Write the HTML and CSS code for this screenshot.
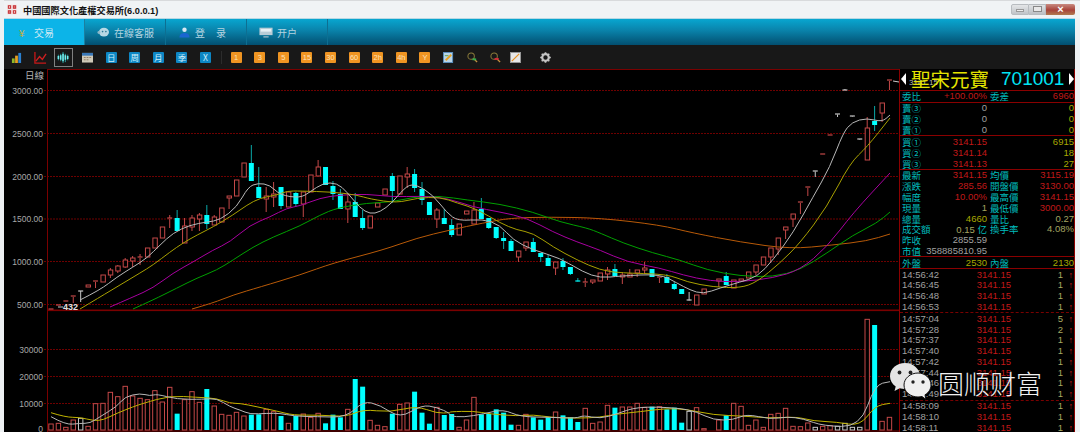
FILE: index.html
```html
<!DOCTYPE html>
<html lang="zh-Hant">
<head>
<meta charset="utf-8">
<title>中國國際文化產權交易所</title>
<link rel="stylesheet" href="styles.css">
</head>
<body>
<div class="window">
  <header class="titlebar">
    <svg class="seal" viewBox="0 0 12 12"><rect width="12" height="12" fill="#f4e8e8"/><path d="M1 1h4v4H1zM7 1h4v4H7zM1 7h4v4H1zM7 7h4v4H7z" fill="#c4282c"/><path d="M2 3h2M3 2v2M8 3h2M2 9h2M8 9h2M9 8v2" stroke="#fff" stroke-width=".7"/></svg>
    <span class="title">中國國際文化產權交易所(6.0.0.1)</span>
    <div class="winbtns">
      <span class="winbtn min"><i class="glyph-min"></i></span>
      <span class="winbtn max"><i class="glyph-max"></i></span>
      <span class="winbtn close">×</span>
    </div>
  </header>

  <nav class="nav">
    <a class="tab active"><span class="yen">¥</span><span>交易</span></a>
    <a class="tab"><svg class="nav-ico" viewBox="0 0 14 12"><ellipse cx="7.5" cy="5.5" rx="5.5" ry="4.8" fill="#b8d8e4"/><circle cx="2" cy="6" r="1.6" fill="#8fb8c8"/><circle cx="6" cy="5" r=".9" fill="#2a7a98"/><circle cx="9.6" cy="5" r=".9" fill="#2a7a98"/></svg><span>在線客服</span></a>
    <a class="tab"><svg class="nav-ico" viewBox="0 0 14 12"><circle cx="7" cy="3" r="2.4" fill="#d8e8f4"/><path d="M1.5 11.5c0-4 2.500-5 5.500-5s5.500 1 5.500 5z" fill="#1a66d0"/></svg><span class="spaced">登</span><span>录</span></a>
    <a class="tab"><svg class="nav-ico wide" viewBox="0 0 16 12"><rect x=".5" y=".5" width="15" height="8.500" fill="#b9ccd6"/><rect x="2" y="2" width="12" height="3" fill="#e8f0f4"/><path d="M5 11h6" stroke="#9fb6c2" stroke-width="1.500"/></svg><span>开户</span></a>
  </nav>

  <div class="toolbar">
    <div class="slot"><svg class="ti" viewBox="0 0 12 12"><rect x="1" y="7" width="3" height="5" fill="#8fb82a"/><rect x="4.500" y="4" width="3" height="8" fill="#e8a020"/><rect x="8" y="1" width="3" height="11" fill="#2a80d0"/></svg></div>
    <div class="slot"><svg class="ti big" viewBox="0 0 14 14"><path d="M1 1v12h12" fill="none" stroke="#c81818" stroke-width="1.400"/><path d="M2 11l4-5 3 3 4-6" fill="none" stroke="#d02020" stroke-width="1.400"/></svg></div>
    <div class="slot"><div class="selected"><svg class="ti big" viewBox="0 0 14 14"><path d="M1.500 4v6M4 3v8M6.500 1v12M9 3v9M11.500 4v6" stroke="#2cc8c8" stroke-width=".8"/><path d="M1.500 5.500v3M4 4.500v5M6.500 3v8M9 4.500v5M11.500 5.500v3" stroke="#6ff0f0" stroke-width="1.700"/></svg></div></div>
    <div class="slot"><svg class="ti" viewBox="0 0 12 12"><rect y="1" width="12" height="10.500" fill="#cfc9b8"/><rect y="1" width="12" height="3" fill="#3a78b8"/><path d="M2 6h2M5 6h2M8 6h2M2 8.500h2M5 8.500h2" stroke="#907860"/></svg></div>
    <div class="slot"><span class="key blue">日</span></div>
    <div class="slot"><span class="key blue">周</span></div>
    <div class="slot"><span class="key blue">月</span></div>
    <div class="slot"><span class="key blue">季</span></div>
    <div class="slot"><span class="key blue">X</span></div>
    <i class="tb-sep"></i>
    <div class="slot"><span class="key orange">1</span></div>
    <div class="slot"><span class="key orange">3</span></div>
    <div class="slot"><span class="key orange">5</span></div>
    <div class="slot"><span class="key orange">15</span></div>
    <div class="slot"><span class="key orange">30</span></div>
    <div class="slot"><span class="key orange">60</span></div>
    <div class="slot"><span class="key orange">2h</span></div>
    <div class="slot"><span class="key orange">4h</span></div>
    <div class="slot"><span class="key orange">Y</span></div>
    <div class="slot"><svg class="ti" viewBox="0 0 12 12"><rect x=".5" y=".5" width="10" height="11" fill="#b8d4e8" stroke="#5a90c0"/><path d="M3 9l6-6" stroke="#e8a020" stroke-width="2"/><path d="M2 4h4" stroke="#60a040"/></svg></div>
    <div class="slot"><svg class="ti" viewBox="0 0 12 12"><circle cx="4.500" cy="4.500" r="3.500" fill="none" stroke="#8a7a3a" stroke-width="1.100"/><path d="M7.500 7.500l3.500 3.500" stroke="#c89040" stroke-width="1.500"/><path d="M6 8h4" stroke="#30b050" stroke-width="2"/></svg></div>
    <div class="slot"><svg class="ti" viewBox="0 0 12 12"><circle cx="4.500" cy="4.500" r="3.500" fill="none" stroke="#8a7a3a" stroke-width="1.100"/><path d="M7.500 7.500l3.500 3.500" stroke="#c89040" stroke-width="1.500"/><path d="M5 7.500h4.500" stroke="#d82838" stroke-width="2"/></svg></div>
    <div class="slot narrow"><svg class="ti" viewBox="0 0 12 12"><rect x=".5" y=".5" width="11" height="11" fill="#e8e8e8" stroke="#999"/><path d="M2 10l8-8" stroke="#e89020" stroke-width="1.300"/></svg></div>
    <div class="slot gear"><svg class="ti" viewBox="0 0 12 12"><circle cx="6" cy="6" r="3.600" fill="none" stroke="#c4c4c4" stroke-width="2.400"/><path d="M6 .2v2.400M6 9.400v2.400M.2 6h2.400M9.400 6h2.400M1.900 1.900l1.700 1.700M8.400 8.400l1.700 1.700M1.900 10.100l1.700-1.700M8.400 3.600l1.700-1.700" stroke="#c4c4c4" stroke-width="1.800"/></svg></div>
  </div>

  <main class="main">
    <section class="chart">
      <svg id="kline" class="kline" viewBox="4 69 895 363" xmlns="http://www.w3.org/2000/svg"></svg>
    </section>

    <aside class="panel">
      <div class="stock">
        <span class="tag">3141.15</span>
        <i class="tri left"></i>
        <span class="stock-name">聖宋元寶</span>
        <span class="stock-code">701001</span>
        <i class="tri right"></i>
      </div>
      <div class="group">
        <div class="row"><div class="cell"><b>委比</b><span class="red">+100.00%</span></div><div class="cell"><b>委差</b><span class="red">6960</span></div></div>
      </div>
      <div class="group book">
        <div class="row"><div class="cell"><b>賣③</b><span class="gray">0</span></div><div class="cell"><b></b><span class="yellow">0</span></div></div>
        <div class="row"><div class="cell"><b>賣②</b><span class="gray">0</span></div><div class="cell"><b></b><span class="yellow">0</span></div></div>
        <div class="row"><div class="cell"><b>賣①</b><span class="gray">0</span></div><div class="cell"><b></b><span class="yellow">0</span></div></div>
      </div>
      <div class="group book">
        <div class="row"><div class="cell"><b>買①</b><span class="red">3141.15</span></div><div class="cell"><b></b><span class="yellow">6915</span></div></div>
        <div class="row"><div class="cell"><b>買②</b><span class="red">3141.14</span></div><div class="cell"><b></b><span class="yellow">18</span></div></div>
        <div class="row"><div class="cell"><b>買③</b><span class="red">3141.13</span></div><div class="cell"><b></b><span class="yellow">27</span></div></div>
      </div>
      <div class="group">
        <div class="row"><div class="cell"><b>最新</b><span class="red">3141.15</span></div><div class="cell"><b>均價</b><span class="red">3115.19</span></div></div>
        <div class="row"><div class="cell"><b>漲跌</b><span class="red">285.56</span></div><div class="cell"><b>開盤價</b><span class="red">3130.00</span></div></div>
        <div class="row"><div class="cell"><b>幅度</b><span class="red">10.00%</span></div><div class="cell"><b>最高價</b><span class="red">3141.15</span></div></div>
        <div class="row"><div class="cell"><b>現量</b><span class="pale">1</span></div><div class="cell"><b>最低價</b><span class="red">3000.00</span></div></div>
        <div class="row"><div class="cell"><b>總量</b><span class="yellow">4660</span></div><div class="cell"><b>量比</b><span class="pale">0.27</span></div></div>
        <div class="row"><div class="cell"><b>成交額</b><span class="pale">0.15 <em>亿</em></span></div><div class="cell"><b>換手率</b><span class="pale">4.08%</span></div></div>
        <div class="row"><div class="cell"><b>昨收</b><span class="gray">2855.59</span></div><div class="cell"></div></div>
        <div class="row"><div class="cell"><b>市值</b><span class="gray">358885810.95</span></div><div class="cell"></div></div>
      </div>
      <div class="group">
        <div class="row"><div class="cell"><b>外盤</b><span class="yellow">2530</span></div><div class="cell"><b>內盤</b><span class="yellow">2130</span></div></div>
      </div>
      <div class="trades">
        <div class="minute">
          <div class="trade"><span class="t">14:56:42</span><span class="p">3141.15</span><span class="v">1</span><span class="a">↑</span></div>
          <div class="trade"><span class="t">14:56:45</span><span class="p">3141.15</span><span class="v">1</span><span class="a">↑</span></div>
          <div class="trade"><span class="t">14:56:48</span><span class="p">3141.15</span><span class="v">1</span><span class="a">↑</span></div>
          <div class="trade"><span class="t">14:56:53</span><span class="p">3141.15</span><span class="v">1</span><span class="a">↑</span></div>
        </div>
        <div class="minute">
          <div class="trade"><span class="t">14:57:04</span><span class="p">3141.15</span><span class="v">5</span><span class="a">↑</span></div>
          <div class="trade"><span class="t">14:57:28</span><span class="p">3141.15</span><span class="v">2</span><span class="a">↑</span></div>
          <div class="trade"><span class="t">14:57:37</span><span class="p">3141.15</span><span class="v">1</span><span class="a">↑</span></div>
          <div class="trade"><span class="t">14:57:40</span><span class="p">3141.15</span><span class="v">1</span><span class="a">↑</span></div>
          <div class="trade"><span class="t">14:57:42</span><span class="p">3141.15</span><span class="v">1</span><span class="a">↑</span></div>
          <div class="trade"><span class="t">14:57:44</span><span class="p">3141.15</span><span class="v">1</span><span class="a">↑</span></div>
          <div class="trade"><span class="t">14:57:46</span><span class="p">3141.15</span><span class="v">1</span><span class="a">↑</span></div>
          <div class="trade"><span class="t">14:57:49</span><span class="p">3141.15</span><span class="v">1</span><span class="a">↑</span></div>
        </div>
        <div class="minute last">
          <div class="trade"><span class="t">14:58:09</span><span class="p">3141.15</span><span class="v">1</span><span class="a">↑</span></div>
          <div class="trade"><span class="t">14:58:10</span><span class="p">3141.15</span><span class="v">1</span><span class="a">↑</span></div>
          <div class="trade"><span class="t">14:58:11</span><span class="p">3141.15</span><span class="v">1</span><span class="a">↑</span></div>
        </div>
      </div>
    </aside>
  </main>
</div>

<div class="watermark">
  <svg class="wechat" viewBox="0 0 44 38">
    <path d="M17 1C8.700 1 2 6.900 2 14.200c0 4.200 2.200 7.900 5.700 10.300L6.500 29l5.200-2.700c1.700.5 3.500.8 5.300.8 8.300 0 15-5.800 15-12.900S25.300 1 17 1z" fill="#e4e4e4"/>
    <circle cx="11.500" cy="10.500" r="1.900" fill="#222"/><circle cx="22.500" cy="10.500" r="1.900" fill="#222"/>
    <path d="M30 11c-7.700 0-14 5.400-14 12s6.300 12 14 12c1.400 0 2.700-.2 4-.5l3.800 2.800-.8-4.500C40.700 30.600 43 27 43 23c0-6.600-5.800-12-13-12z" fill="#f0f0f0" stroke="#111" stroke-width="1"/>
    <circle cx="25" cy="20" r="1.700" fill="#222"/><circle cx="35" cy="20" r="1.700" fill="#222"/>
  </svg>
  <span class="wm-text">圆顺财富</span>
</div>
<script src="chart.js"></script>
</body>
</html>
```
FILE: styles.css
```css
* { box-sizing: border-box; margin: 0; padding: 0; }
html, body { width: 1080px; height: 432px; overflow: hidden; }
body { background: #eef1f3; font-family: "Liberation Sans", "Noto Sans CJK TC", sans-serif; position: relative; }
.window { display: flex; flex-direction: column; height: 432px; padding: 0 5px 0 4px; }

.titlebar { height: 18px; display: flex; align-items: center; border-top: 1px solid #d8dadc; margin-right: -5px; padding: 0 5px 0 3px; gap: 6px; background: #f0f3f5; }
.seal { width: 10px; height: 11px; flex: none; }
.title { font-size: 9.200px; color: #111; font-weight: 700; font-family: "Liberation Sans", "Noto Sans CJK TC", sans-serif; flex: 1; }
.winbtns { display: flex; height: 11px; margin-top: -1px; }
.winbtn { display: flex; align-items: center; justify-content: center; height: 11px; }
.winbtn.min { width: 18px; background: linear-gradient(#e4e6e8, #c0c4c8); border-radius: 2px 0 0 2px; border: 1px solid #b8bcc0; }
.winbtn.max { width: 17px; background: linear-gradient(#e0e2e4, #bcc0c4); border: 1px solid #b8bcc0; border-left: 0; }
.winbtn.close { width: 29px; background: linear-gradient(#c88a80, #a8433a 55%, #b07a50); color: #fff; font-size: 11px; font-weight: 700; border-radius: 0 2px 2px 0; line-height: 11px; }
.glyph-min { width: 8px; height: 3px; border: 1px solid #999; background: #eee; margin-top: 3px; }
.glyph-max { width: 9px; height: 6px; border: 1px solid #888; background: #e8e8e8; }

.nav { height: 27px; display: flex; background: linear-gradient(#08a6d0, #0a86ae 40%, #024f70); border-top: 1px solid #b8d8e4; }
.tab { width: 81px; display: flex; align-items: center; padding-left: 12px; gap: 4px; font-size: 10px; color: #b4d4e0; border-right: 1px solid #0d6f92; font-family: "Noto Sans CJK TC", sans-serif; }
.tab.active { background: #0cb4e8; color: #cfeaf4; border-right: 1px solid #1b7fa0; padding-left: 15px; gap: 9px; }
.yen { color: #c8b040; font-size: 10px; width: 6px; }
.nav-ico { width: 13px; height: 11px; flex: none; }
.nav-ico.wide { width: 14px; }
.spaced { margin-right: 7px; }

.toolbar { height: 24px; display: flex; align-items: center; background: #181818; padding-left: 1px; }
.slot { width: 23.6px; display: flex; align-items: center; justify-content: center; flex: none; }
.slot.narrow { margin-left: -3.6px; }
.slot.gear { margin-left: 6px; }
.ti { width: 11px; height: 11px; display: block; }
.ti.big { width: 13px; height: 13px; }
.selected { width: 19px; height: 19px; border: 1px solid #808080; display: flex; align-items: center; justify-content: center; }
.key { width: 11px; height: 11px; display: flex; align-items: center; justify-content: center; border-radius: 1px; overflow: hidden; white-space: nowrap; }
.key.blue { background: #0d86c4; color: #cfeefa; font-size: 8.500px; font-family: "Noto Sans CJK TC", sans-serif; }
.key.orange { background: #ef9422; color: #fbe0b8; font-size: 7.500px; }
.tb-sep { width: 1px; height: 13px; background: #2c2c2c; margin: 0 2px 0 4px; flex: none; }

.main { flex: 1; display: flex; min-height: 0; background: #000; }
.chart { width: 895px; flex: none; }
.kline { display: block; width: 895px; height: 363px; overflow: hidden; }
.kline text { font-family: "Liberation Sans", sans-serif; }

.panel { width: 176px; flex: none; border-left: 1px solid #8a0000; border-right: 1px solid #8a0000; font-size: 9.500px; overflow: hidden; }
.stock { height: 22px; display: flex; align-items: center; border-bottom: 1px solid #8a0000; padding: 0 0 1px 1px; position: relative; }
.tag { position: absolute; left: 9px; top: 9px; font-size: 8px; color: #bbb; }
.tri { width: 0; height: 0; border-top: 6px solid transparent; border-bottom: 6px solid transparent; flex: none; position: relative; }
.tri.left { border-right: 5px solid #fff; }
.tri.right { border-left: 5px solid #fff; margin-left: 5px; }
.stock-name { font-family: "Noto Sans CJK TC", sans-serif; font-size: 19.500px; line-height: 20px; color: #e4e400; margin-left: 5px; width: 92px; position: relative; }
.stock-code { font-size: 19px; line-height: 20px; color: #00e4f4; width: 63px; position: relative; }

.group { border-bottom: 1px solid #8a0000; }
.group.book { padding-top: .2px; }
.row { height: 10.800px; display: grid; grid-template-columns: 85px 84px; column-gap: 3px; padding: 0 0 0 2px; }
.cell { display: flex; justify-content: space-between; align-items: center; line-height: 10px; white-space: nowrap; }
.cell b { font-weight: 400; color: #00bcbc; font-family: "Noto Sans CJK TC", sans-serif; font-size: 9.500px; }
.cell em { font-style: normal; color: #00bcbc; font-family: "Noto Sans CJK TC", sans-serif; }
.red { color: #c01818; }
.yellow { color: #a8a800; }
.pale { color: #a4a460; }
.gray { color: #a0a0a0; }

.minute { border-bottom: 1px dashed #7a0000; }
.minute.last { border-bottom: 0; }
.trade { height: 10.800px; display: flex; align-items: center; line-height: 10px; padding-left: 2px; white-space: nowrap; }
.t { width: 37px; color: #a0a0a0; flex: none; }
.p { width: 72px; text-align: right; color: #c01818; flex: none; }
.v { width: 52px; text-align: right; color: #a8a860; flex: none; }
.a { width: 10px; text-align: right; color: #d01818; font-weight: 700; font-size: 9px; flex: none; }

.watermark { position: absolute; left: 888px; top: 362px; display: flex; align-items: flex-start; }
.wechat { width: 44px; height: 38px; display: block; }
.wm-text { font-family: "Noto Sans CJK SC", sans-serif; font-weight: 300; font-size: 26px; line-height: 30px; color: #f0f0f0; margin: 6px 0 0 6px; text-shadow: 0 0 2px #000; white-space: nowrap; }
```
FILE: chart.js
```js
var NS = 'http://www.w3.org/2000/svg';
var svg = document.getElementById('kline');
function el(tag, attrs, text) {
  var e = document.createElementNS(NS, tag);
  for (var k in attrs) e.setAttribute(k, attrs[k]);
  if (text) e.textContent = text;
  svg.appendChild(e);
  return e;
}
var RED = '#c44848', CYAN = '#00ffff', WICKC = '#0aa8a8', WHITE = '#c8c8c8', GRID = '#6e0000', AXIS = '#7a0000';
var X0 = 51, STEP = 7.42;

/* frame and grid */
el('line', {x1: 47.5, y1: 69, x2: 47.5, y2: 432, stroke: AXIS});
el('line', {x1: 47, y1: 69.5, x2: 899, y2: 69.5, stroke: AXIS});
[[90.5, '3000.00'], [133.5, '2500.00'], [176.5, '2000.00'], [219, '1500.00'], [261.5, '1000.00'], [304.5, '500.00']].forEach(function (g) {
  el('line', {x1: 44, y1: g[0], x2: 899, y2: g[0], stroke: GRID, 'stroke-dasharray': '2 1'});
  el('text', {x: 43, y: g[0] + 3, 'text-anchor': 'end', 'font-size': 8.5, fill: '#a8a8a8'}, g[1]);
});
el('rect', {x: 47, y: 309.5, width: 852, height: 1.6, fill: '#7a0000'});
[[349.5, '30000'], [376.5, '20000'], [403.5, '10000']].forEach(function (g) {
  el('line', {x1: 44, y1: g[0], x2: 899, y2: g[0], stroke: GRID, 'stroke-dasharray': '2 1'});
  el('text', {x: 43, y: g[0] + 3, 'text-anchor': 'end', 'font-size': 8.5, fill: '#a8a8a8'}, g[1]);
});
el('text', {x: 43, y: 431.5, 'text-anchor': 'end', 'font-size': 8.5, fill: '#a8a8a8'}, '0');
el('line', {x1: 47, y1: 431, x2: 899, y2: 431, stroke: AXIS});
el('text', {x: 44, y: 79, 'text-anchor': 'end', 'font-size': 9.5, fill: '#b4b4b4', style: 'font-family:\'Noto Sans CJK TC\',sans-serif'}, '日線');

/* candles: type, body top, body bottom, high, low */
var K = [
['r',309,310,309,310],['r',305,306,305,306],['r',301,302,301,302],['r',296,297,296,303],['w',291,291,291,302],
['r',285,287,285,287],['r',281,282,281,288],['r',275,282,275,282],['r',270,275,268,278],['r',266,271,265,273],
['r',260,267,258,268],['r',258,261,256,267],['r',257,258,254,265],['r',248,257,248,257],['r',238,248,238,248],
['r',227,238,227,238],['r',218,219,215,228],['c',218,231,210,231],['r',226,243,218,243],['r',218,227,215,231],
['r',215,219,213,231],['c',215,224,205,229],['r',217,225,215,225],['r',208,222,208,222],['r',196,198,196,209],
['r',180,196,180,196],['r',163,177,163,177],['c',163,181,145,181],['c',187,198,167,198],['r',196,199,187,212],
['r',194,197,182,207],['c',187,206,187,209],['r',192,207,192,207],['c',193,204,192,207],['r',192,204,192,217],
['r',175,192,175,192],['r',167,176,160,176],['c',167,185,167,185],['c',186,194,181,200],['c',194,209,189,209],
['r',202,209,193,223],['c',202,217,193,217],['c',218,228,210,230],['r',216,228,216,228],['r',203,207,203,207],
['r',189,195,189,195],['c',176,191,173,203],['r',176,194,176,194],['r',174,177,167,188],['c',174,188,169,192],
['c',189,200,182,205],['c',202,215,202,215],['r',210,219,208,228],['c',218,224,209,224],['c',225,235,219,237],
['r',224,235,224,235],['r',211,214,211,214],['r',210,224,202,224],['c',209,219,198,219],['c',218,228,218,229],
['c',227,238,227,239],['c',238,241,232,249],['c',241,251,239,251],['r',251,257,251,262],['r',242,248,242,251],
['c',242,252,238,252],['c',253,257,253,262],['c',258,266,255,266],['r',262,268,262,275],['c',261,267,258,270],
['c',267,274,267,275],['c',281,281.5,278,282],['r',282,283,278,287],['r',280,282,280,284],['r',273,281,273,281],
['r',270,274,267,280],['c',269,276,264,276],['r',275,277,272,284],['r',274,277,269,277],['r',270,273,270,277],
['r',268,270,262,274],['c',269,277,269,277],['r',277,278,277,283],['c',277,283,274,283],['c',284,289,282,290],
['c',289,294,289,294],['w',300,300.5,292,301],['r',295,305,295,305],['r',289,294,289,294],null,
['r',279,281,279,287],['c',276,285,272,285],['r',280,288,280,288],['r',279,281,279,281],['r',272,278,272,278],
['r',265,272,265,275],['r',257,265,257,265],['r',248,257,248,263],['r',238,249,238,255],['r',227,230,227,239],
['r',214,219,214,227],['r',202,203,202,214],['r',187,188,187,196],['w',171,171.5,171,177],['r',154,155,154,155],
['r',135,136,135,136],['w',114,114.5,114,117],['w',90,91,89,91],['w',116,116.5,116,117],['w',139,139.5,139,140],
['r',128,160,117,160],['c',121,125,106,131],['r',103,113,103,122],['r',80,81,80,90]
];
var ix = function (i) { return X0 + STEP * i; };
K.forEach(function (c, i) {
  if (!c) return;
  var x = ix(i), col = c[0] === 'c' ? CYAN : c[0] === 'w' ? WHITE : RED, wick = c[0] === 'c' ? WICKC : col;
  if (c[3] < c[1]) el('line', {x1: x, y1: c[3], x2: x, y2: c[1], stroke: wick});
  if (c[4] > c[2]) el('line', {x1: x, y1: c[2], x2: x, y2: c[4], stroke: wick});
  if (c[2] - c[1] < 1.5) {
    el('line', {x1: x - 2.5, y1: c[1], x2: x + 2.5, y2: c[1], stroke: col, 'stroke-width': 1.2});
  } else if (c[0] === 'c') {
    el('rect', {x: x - 2.5, y: c[1], width: 5, height: c[2] - c[1], fill: CYAN});
  } else {
    el('rect', {x: x - 2, y: c[1], width: 4.4, height: c[2] - c[1], fill: '#000', stroke: col});
  }
});
el('line', {x1: 893, y1: 81, x2: 899, y2: 82, stroke: '#ccc'});

/* moving averages: quadratic curves through the midpoints of the sampled points */
function line(pts, col, w) {
  var p = pts.trim().split(/\s+/).map(function (s) { return s.split(',').map(Number); });
  var d = 'M' + p[0][0] + ' ' + p[0][1];
  for (var i = 1; i < p.length - 1; i++) {
    var mx = (p[i][0] + p[i + 1][0]) / 2, my = (p[i][1] + p[i + 1][1]) / 2;
    d += 'Q' + p[i][0] + ' ' + p[i][1] + ' ' + mx.toFixed(1) + ' ' + my.toFixed(1);
  }
  d += 'L' + p[p.length - 1][0] + ' ' + p[p.length - 1][1];
  el('path', {d: d, fill: 'none', stroke: col, 'stroke-width': w || 1, 'stroke-linejoin': 'round'});
}
line('192,309 213,303 233,295 260,287 300,275 333,263 383,250 417,238 450,230 483,223 510,218 550,217 600,218 660,225 693,233 740,242 790,249 833,245 867,241 890,234', '#b85a08');
line('133,309 153,300 177,288 197,278 217,270 233,260 253,247 273,237 300,226 320,215 337,208 367,203 393,202 413,197 440,196 467,200 500,204 533,212 560,222 587,228 600,233 623,243 653,253 680,260 707,270 740,276 773,277 800,270 827,253 853,235 877,223 890,212', '#00a000');
line('110,307 133,297 153,288 173,273 193,262 213,250 230,242 250,225 270,217 287,208 300,206 320,198 340,195 367,194 393,197 420,196 447,198 473,207 500,212 527,218 553,232 577,242 600,250 627,262 660,268 683,275 710,281 740,282 773,278 800,270 827,247 853,213 890,173', '#a800a0');
line('80,309 100,297 120,285 140,273 153,265 170,252 183,243 197,235 213,227 233,215 247,205 260,198 277,195 287,191 300,191 333,192 357,195 370,199 397,203 417,198 440,197 457,203 477,209 500,223 517,230 533,233 553,247 577,260 600,270 620,273 667,274 687,282 713,287 740,288 757,282 780,263 800,243 827,207 850,163 867,147 890,118', '#a8a000');
line('80,300 100,290 117,277 133,267 147,258 160,245 173,233 190,225 207,222 220,220 237,207 248,187 258,183 270,185 280,195 300,198 310,192 323,183 337,183 347,192 360,208 370,214 380,212 392,203 407,185 417,185 433,195 447,213 458,221 483,219 500,225 513,240 533,250 560,258 583,272 600,278 620,276 660,274 677,283 690,290 703,294 720,288 740,282 757,277 773,260 793,233 813,197 830,167 843,133 852,122 867,118 882,122 890,115', '#b8b8b8');

/* lowest price note */
el('line', {x1: 58, y1: 307, x2: 63, y2: 307, stroke: '#ccc'});
el('text', {x: 63, y: 310, 'font-size': 9, 'font-weight': 700, fill: '#e0e0e0'}, '432');

/* volume: type, top y */
var V = [
['r',342],['r',340],['r',352],['r',330],['w',325],['r',349],['r',281],['r',280],['r',247],['r',260],
['r',229],['r',258],['r',265],['r',269],['r',242],['r',276],['r',232],['c',311],['r',269],['r',245],
['r',277],['c',237],['r',288],['r',313],['r',316],['r',307],['r',318],['c',314],['c',313],['r',298],
['r',305],['c',318],['r',340],['c',318],['r',312],['r',322],['r',310],['c',340],['c',314],['c',322],
['r',298],['c',207],['c',230],['r',331],['r',346],['r',350],['c',311],['r',283],['r',279],['c',245],
['c',308],['c',341],['r',292],['c',315],['c',312],['r',352],['r',330],['r',262],['c',313],['c',312],
['c',298],['c',308],['c',344],['r',346],['r',313],['c',322],['c',329],['c',322],['r',306],['c',316],
['c',322],['c',336],['r',295],['r',340],['r',336],['r',286],['c',293],['r',291],['r',291],['r',280],
['r',292],['c',290],['r',290],['c',298],['c',293],['c',338],['w',304],['r',293],['r',356],null,
['r',330],['c',316],['r',280],['r',289],['r',346],['r',330],['r',352],['r',313],['r',310],['r',295],
['r',349],['r',350],['r',339],['w',352],['r',349],['r',347],['w',349],['w',340],['w',352],['w',352],
['r',28],['c',45],['r',334],['r',322]
];
V.forEach(function (b, i) {
  if (!b) return;
  var x = ix(i), top = 310 + b[1] / 3, h = 430 - top;
  if (b[0] === 'c') el('rect', {x: x - 2.5, y: top, width: 5, height: h, fill: CYAN});
  else el('rect', {x: x - 2.2, y: top, width: 4.4, height: h, fill: '#000', stroke: b[0] === 'w' ? WHITE : RED});
});
function zoomed(offset, list) {
  return list.map(function (p) { return (offset + p[0] / 3).toFixed(1) + ',' + (310 + p[1] / 3).toFixed(1); }).join(' ');
}
line(zoomed(0, [[153,308],[197,322],[240,322],[280,332],[310,330],[350,310],[400,290],[430,280],[510,257],[590,262],[650,265],[690,280],[720,280],[770,290],[830,303],[880,316],[960,315],[1040,320],[1090,298],[1170,307],[1250,288],[1310,310],[1350,308]]) + ' ' +
     zoomed(450, [[0,305],[70,303],[120,312],[200,318],[250,314],[300,322],[380,325],[450,322],[500,312],[570,305],[650,295],[710,298],[790,315],[880,318],[960,325],[1040,320],[1090,333],[1160,336],[1230,348],[1275,288],[1320,280]]), '#c0b400');
line(zoomed(0, [[153,320],[197,345],[240,340],[270,340],[300,320],[350,290],[375,260],[420,250],[450,258],[470,252],[530,268],[610,268],[650,265],[690,290],[720,300],[750,313],[800,310],[840,310],[880,318],[950,320],[1040,322],[1090,273],[1140,285],[1200,325],[1265,285],[1310,292],[1350,310]]) + ' ' +
     zoomed(450, [[0,318],[40,322],[100,312],[160,298],[210,320],[300,322],[380,325],[400,316],[450,326],[500,312],[560,290],[680,293],[740,305],[790,330],[850,330],[890,312],[960,328],[1010,320],[1060,326],[1120,348],[1230,350],[1275,224],[1320,215]]), '#b8b8b8');
```
